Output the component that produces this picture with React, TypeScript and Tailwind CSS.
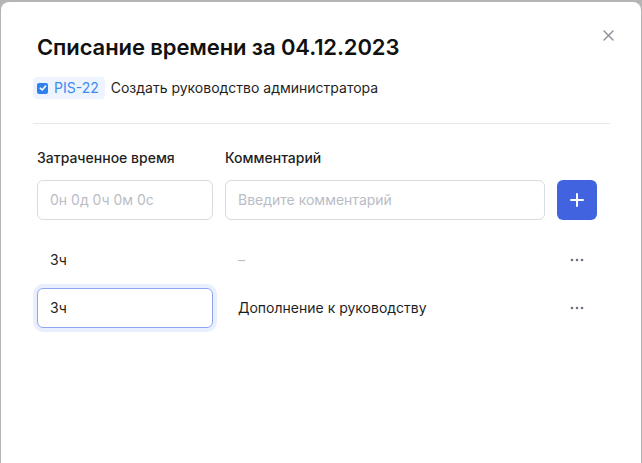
import React from "react";

type Entry = {
  time: string;
  comment: string;
  editing?: boolean;
};

const entries: Entry[] = [
  { time: "3ч", comment: "" },
  { time: "3ч", comment: "Дополнение к руководству", editing: true },
];

function Dots() {
  return (
    <svg width="14" height="4" viewBox="0 0 14 4" fill="#6b7280">
      <circle cx="2" cy="2" r="1.3" />
      <circle cx="7" cy="2" r="1.3" />
      <circle cx="12" cy="2" r="1.3" />
    </svg>
  );
}

function EntryRow({ time, comment, editing }: Entry) {
  return (
    <div className="grid grid-cols-[176px_320px_40px] gap-x-3 h-10 items-center">
      {editing ? (
        <div className="h-10 rounded-md border border-[#8fa5f2] ring-4 ring-[#eaefff] flex items-center px-3 text-sm text-[#1f1f1f]">
          {time}
        </div>
      ) : (
        <div className="h-10 flex items-center px-[13px] text-sm text-[#1f1f1f]">{time}</div>
      )}
      <div className="px-[13px] text-sm">
        {comment ? (
          <span className="text-[#1f1f1f]">{comment}</span>
        ) : (
          <span className="text-[#b9bdc6]">–</span>
        )}
      </div>
      <div className="flex justify-center">
        <Dots />
      </div>
    </div>
  );
}

export default function App() {
  return (
    <div
      className="w-[642px] h-[463px] bg-[#b5b5b5] pt-[2px] px-[1px] overflow-hidden"
      style={{ fontFamily: "Inter, 'Noto Sans', sans-serif" }}
    >
      <div className="relative h-full bg-white rounded-t-lg pl-8 pr-[31px] pt-[31px]">
        <button className="absolute right-[27px] top-[27px] w-3 h-3 flex items-center justify-center">
          <svg width="11" height="11" viewBox="0 0 11 11" stroke="#8a8d93" strokeWidth="1.4" strokeLinecap="round">
            <path d="M1 1L10 10M10 1L1 10" />
          </svg>
        </button>

        <h1 className="pl-1 text-[22px] leading-7 font-semibold text-[#111111] tracking-[-0.1px]">
          Списание времени за 04.12.2023
        </h1>

        <div className="mt-4 flex items-center gap-[6px]">
          <div className="h-[22px] rounded bg-[#eef4ff] flex items-center gap-[6px] pl-1 pr-[6px]">
            <span className="w-[11px] h-[11px] rounded-[2px] bg-[#2f80ed] flex items-center justify-center">
              <svg width="8" height="8" viewBox="0 0 8 8" fill="none" stroke="white" strokeWidth="1.6" strokeLinecap="round" strokeLinejoin="round">
                <path d="M1.3 4.2L3.2 6L6.7 2" />
              </svg>
            </span>
            <span className="text-sm text-[#3b8bf0]">PIS-22</span>
          </div>
          <span className="text-sm text-[#1f1f1f]">Создать руководство администратора</span>
        </div>

        <div className="mt-[24px] border-t border-[#e8e8ea]" />

        <div className="pl-1 pt-[24px]">
          <div className="grid grid-cols-[176px_320px_40px] gap-x-3">
            <div className="text-sm font-medium text-[#1f1f1f] leading-5">Затраченное время</div>
            <div className="text-sm font-medium text-[#1f1f1f] leading-5">Комментарий</div>
            <div />
          </div>

          <div className="mt-[12px] grid grid-cols-[176px_320px_40px] gap-x-3">
            <div className="h-10 rounded-md border border-[#d9dbe0] flex items-center px-3 text-sm text-[#b9bdc6]">
              0н 0д 0ч 0м 0с
            </div>
            <div className="h-10 rounded-md border border-[#d9dbe0] flex items-center px-3 text-sm text-[#b9bdc6]">
              Введите комментарий
            </div>
            <button className="h-10 w-10 rounded-md bg-[#4263e0] flex items-center justify-center">
              <svg width="14" height="14" viewBox="0 0 14 14" stroke="white" strokeWidth="2" strokeLinecap="round">
                <path d="M7 1V13M1 7H13" />
              </svg>
            </button>
          </div>

          <div className="mt-5 flex flex-col gap-2">
            {entries.map((item, index) => (
              <EntryRow key={index} time={item.time} comment={item.comment} editing={item.editing} />
            ))}
          </div>
        </div>
      </div>
    </div>
  );
}
